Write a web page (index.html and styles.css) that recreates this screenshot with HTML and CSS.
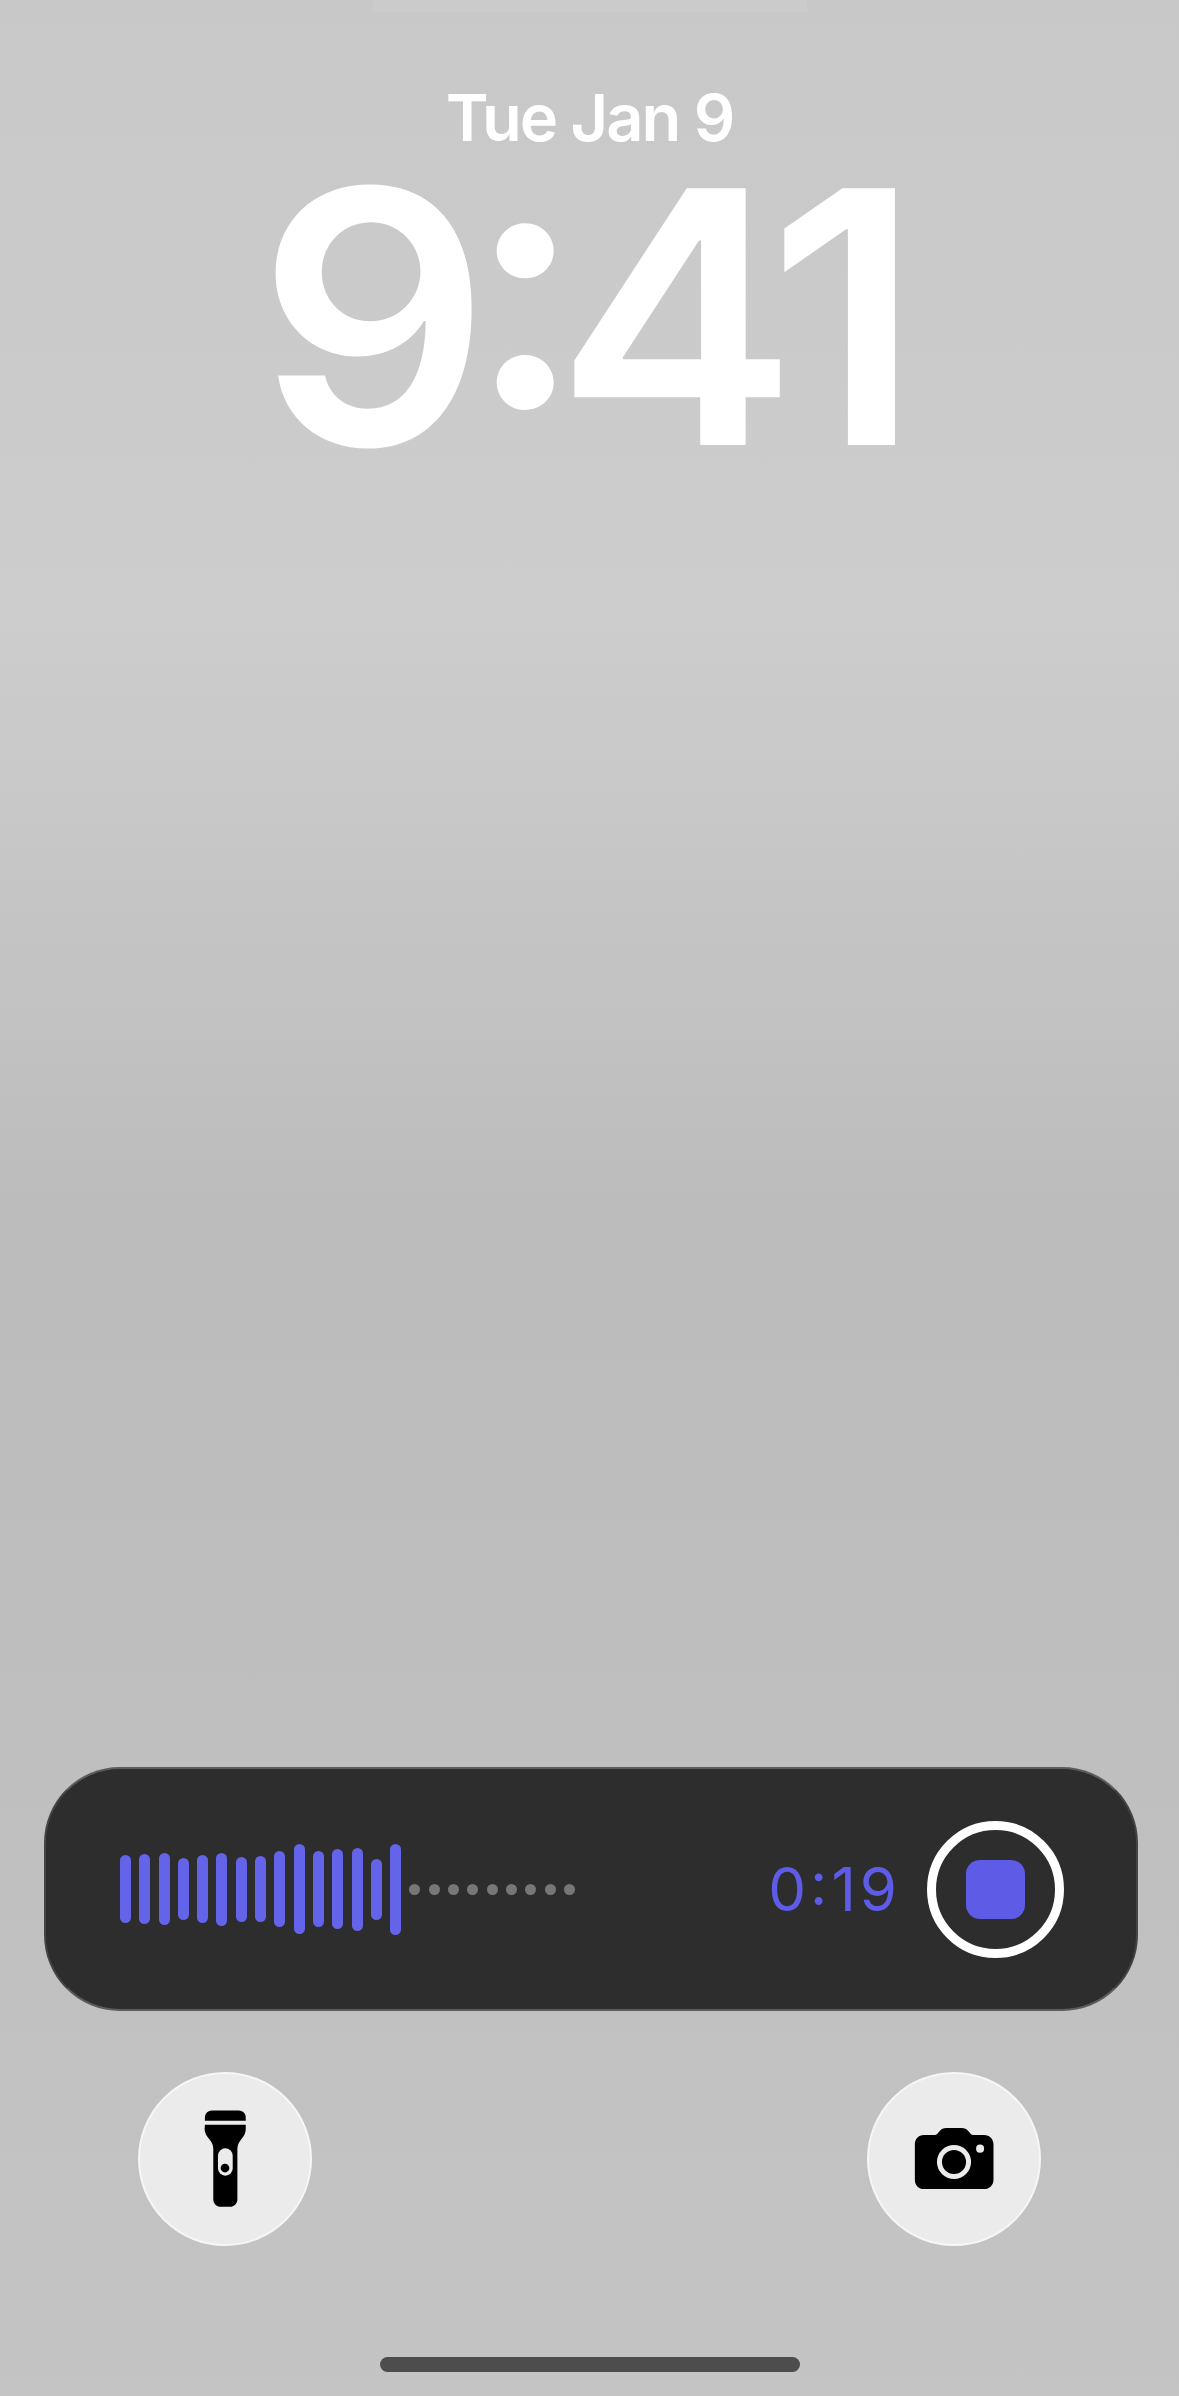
FILE: index.html
```html
<!DOCTYPE html>
<html lang="en">
<head>
  <meta charset="UTF-8">
  <title>Lock Screen</title>
  <link rel="stylesheet" href="styles.css">
</head>
<body>
  <div class="screen">
    <div class="top-strip"></div>

    <div class="clock">
      <div class="date">Tue Jan 9</div>
      <div class="time"><span class="t-nine">9</span><span class="t-colon">:</span><span class="t-four">4</span><span class="t-one">1</span></div>
    </div>

    <!-- recording activity -->
    <div class="recorder">
      <div class="wave">
        <span class="bar" style="height:68px"></span>
        <span class="bar" style="height:70px"></span>
        <span class="bar" style="height:72px"></span>
        <span class="bar" style="height:62px"></span>
        <span class="bar" style="height:68px"></span>
        <span class="bar" style="height:73px"></span>
        <span class="bar" style="height:65px"></span>
        <span class="bar" style="height:66px"></span>
        <span class="bar" style="height:76px"></span>
        <span class="bar" style="height:90px"></span>
        <span class="bar" style="height:76px"></span>
        <span class="bar" style="height:80px"></span>
        <span class="bar" style="height:83px"></span>
        <span class="bar" style="height:61px"></span>
        <span class="bar" style="height:91px"></span>
        <span class="dot"></span>
        <span class="dot"></span>
        <span class="dot"></span>
        <span class="dot"></span>
        <span class="dot"></span>
        <span class="dot"></span>
        <span class="dot"></span>
        <span class="dot"></span>
        <span class="dot"></span>
      </div>
      <div class="timer">0:19</div>
      <div class="stop-ring"><div class="stop-square"></div></div>
    </div>

    <div class="quick-actions">
      <div class="round-btn">
        <svg class="round-icon" viewBox="55 67 520 520" aria-label="Flashlight">
          <path d="M255 213v-10c0-12 9-21 21-21h80c12 0 21 9 21 21v10z"/>
          <path d="M255 225h122v12c0 12-5 21-14 32-7 9-11 18-11 28v151c0 12-10 22-22 22h-28c-12 0-22-10-22-22V297c0-10-4-19-11-28-9-11-15-20-15-32z"/>
          <rect class="icon-cut" x="294" y="295" width="44" height="82" rx="22"/>
          <circle cx="315" cy="354" r="13"/>
        </svg>
      </div>
      <div class="round-btn">
        <svg class="round-icon" viewBox="52 67 520 520" aria-label="Camera">
          <path d="M222 255h32c6 0 9-3 12-8 6-9 13-13 24-13h44c11 0 18 4 24 13 3 5 6 8 12 8h32c16 0 28 12 28 28v106c0 16-12 28-28 28H222c-16 0-27-12-27-28V283c0-16 11-28 27-28z"/>
          <circle class="icon-cut" cx="312" cy="336" r="51"/>
          <circle cx="312" cy="336" r="36"/>
          <circle class="icon-cut" cx="390" cy="296" r="12"/>
        </svg>
      </div>
    </div>

    <div class="home-bar"></div>
  </div>
</body>
</html>
```

FILE: styles.css
```css
* { margin: 0; padding: 0; box-sizing: border-box; }
body {
  width: 1179px;
  height: 2396px;
  overflow: hidden;
  font-family: "Inter", "Liberation Sans", sans-serif;
}
.screen {
  height: 2396px;
  display: flex;
  flex-direction: column;
  align-items: center;
  background: linear-gradient(180deg, #c8c8c8 0, #cdcdcd 620px, #bcbcbc 1220px, #bfbfbf 1750px, #c4c4c4 2396px);
}
.top-strip {
  width: 434px;
  height: 12px;
  background: #cbcbcb;
}
.clock {
  display: flex;
  flex-direction: column;
  align-items: center;
  color: #fff;
}
.date {
  margin-top: 71px;
  font-size: 65px;
  font-weight: 600;
  line-height: 70px;
  letter-spacing: -2px;
}
.time {
  margin-top: -11px;
  font-size: 353px;
  font-weight: 600;
  line-height: 349px;
  font-feature-settings: "case";
  transform: scaleX(1.03);
}
/* digits sit tighter than the font's own spacing */
.t-nine { letter-spacing: -22px; }
.t-colon { letter-spacing: -27px; }
.t-four { letter-spacing: -29px; }
.t-one { letter-spacing: 1px; }

.recorder {
  width: 1094px;
  height: 244px;
  margin-top: auto;
  align-self: flex-start;
  margin-left: 44px;
  display: flex;
  align-items: center;
  padding: 0 72px 0 74px;
  border: 2px solid;
  border-color: #5c5c5c #444;
  border-radius: 76px;
  background: #2d2d2d;
}
.wave {
  display: flex;
  align-items: center;
  gap: 8.3px;
}
.bar {
  width: 11px;
  border-radius: 6px;
  background: #6464ea;
}
.dot {
  width: 11px;
  height: 11px;
  border-radius: 50%;
  background: #777;
}
.timer {
  margin-left: auto;
  margin-right: 26px;
  font-size: 60px;
  font-weight: 400;
  line-height: 60px;
  letter-spacing: 4px;
  font-feature-settings: "case";
  color: #5e5ce6;
}
.stop-ring {
  width: 137px;
  height: 137px;
  display: flex;
  align-items: center;
  justify-content: center;
  border: 9px solid #fff;
  border-radius: 50%;
}
.stop-square {
  width: 59px;
  height: 59px;
  border-radius: 14px;
  background: #5e5ce6;
}

.quick-actions {
  width: 100%;
  display: flex;
  justify-content: space-between;
  padding: 0 138px;
  margin-top: 61px;
}
.round-btn {
  width: 174px;
  height: 174px;
  border: 2px solid #f6f6f6;
  border-radius: 50%;
  background: #ebebeb;
  overflow: hidden;
}
.round-icon {
  display: block;
  width: 174px;
  height: 174px;
  margin: -2px;
  fill: #000;
}
.icon-cut { fill: #ebebeb; }

.home-bar {
  width: 420px;
  height: 15px;
  margin-top: 111px;
  margin-bottom: 24px;
  border-radius: 8px;
  background: #4d4d4d;
}
```
